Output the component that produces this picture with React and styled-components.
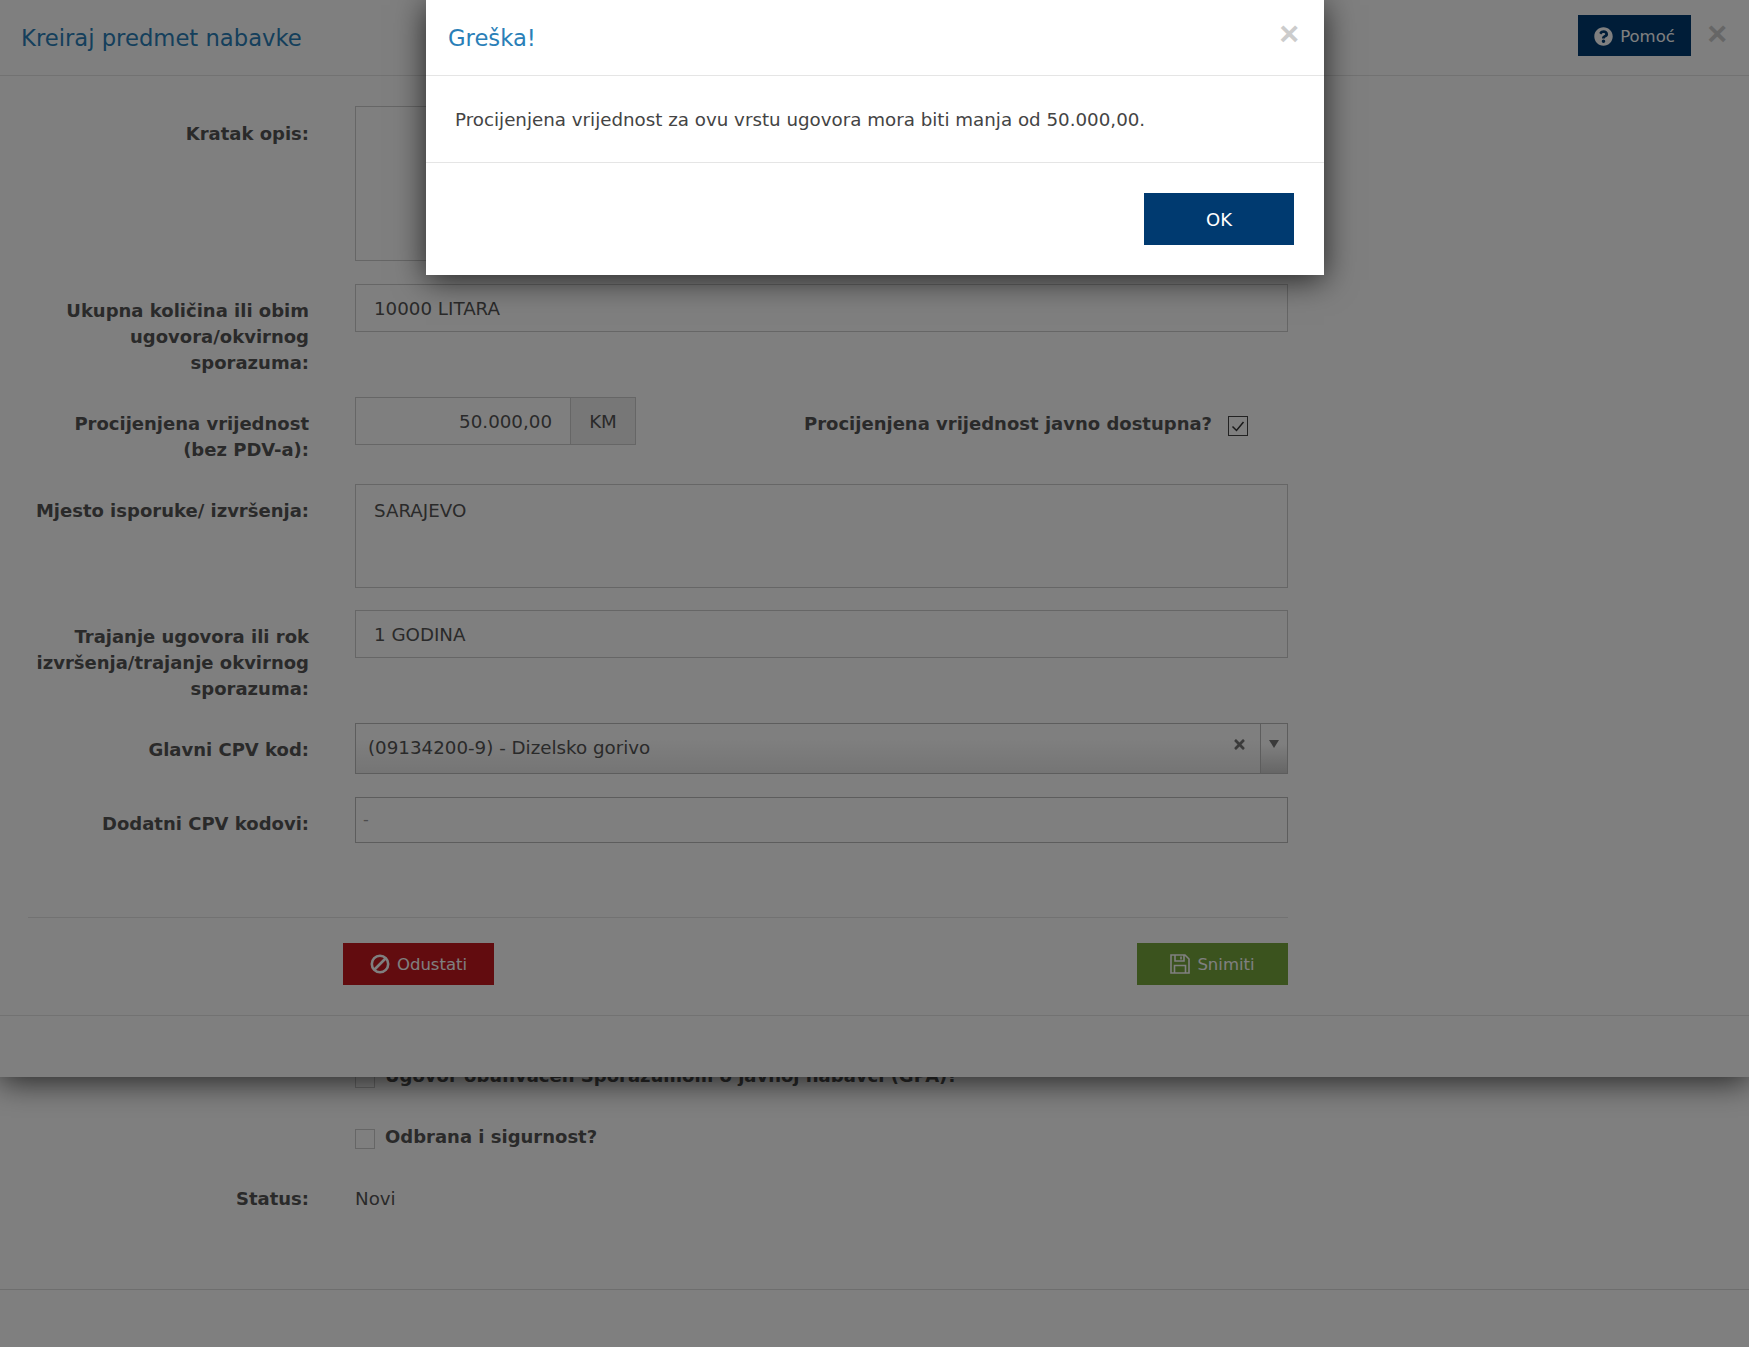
import styled, { createGlobalStyle } from "styled-components";
import { FaQuestionCircle, FaTimes } from "react-icons/fa";

const GlobalStyle = createGlobalStyle`
  html, body {
    margin: 0;
    padding: 0;
    background: #fff;
  }
  body {
    font-family: "DejaVu Sans", Verdana, sans-serif;
    font-size: 18.25px;
    color: #555;
  }
  * {
    box-sizing: border-box;
  }
`;

const Page = styled.div`
  position: relative;
  width: 1749px;
  height: 1347px;
  overflow: hidden;
  background: #fff;
`;

const BasePage = styled.div`
  padding: 1056px 0 0 28px;
  height: 1347px;
`;

const BaseLine = styled.div`
  position: absolute;
  left: 0;
  right: 0;
  top: 1289px;
  border-top: 1px solid #ddd;
`;

const CheckRow = styled.div`
  display: flex;
  align-items: flex-start;
  gap: 10px;
  padding-left: 327px;
  height: ${(p) => p.$h || 61}px;
  padding-top: 8px;
  font-weight: bold;
  font-size: 18px;
  line-height: 24px;
`;

const Box = styled.span`
  flex: none;
  display: flex;
  align-items: center;
  justify-content: center;
  width: 20px;
  height: 20px;
  margin-top: 4px;
  border: 1px solid #ccc;
  background: #fff;
`;

const StatusRow = styled.div`
  display: grid;
  grid-template-columns: 281px 1fr;
  column-gap: 46px;
  line-height: 26px;
  padding-top: 7px;
`;

const Panel = styled.div`
  position: absolute;
  left: 0;
  top: 0;
  width: 100%;
  height: 1077px;
  background: #fff;
  box-shadow: 0 5px 30px rgba(0, 0, 0, 0.7);
`;

const PanelHeader = styled.div`
  display: flex;
  align-items: center;
  height: 76px;
  padding: 0 22px 0 21px;
  border-bottom: 1px solid #e5e5e5;
`;

const Title = styled.h4`
  margin: 0;
  flex: 1;
  font-size: 22.7px;
  font-weight: normal;
  color: #2a7fb8;
`;

const HelpButton = styled.div`
  display: flex;
  align-items: center;
  gap: 7px;
  width: 113px;
  height: 41px;
  margin-top: -5px;
  padding: 2px 0 0 16px;
  background: #003a70;
  color: #fff;
  font-size: 16.5px;
`;

const HelpIcon = styled(FaQuestionCircle)`
  font-size: 19px;
`;

const CloseMark = styled.span`
  font-family: "Liberation Sans", Arial, sans-serif;
  font-size: 34px;
  line-height: 30px;
  font-weight: bold;
  color: #ccc;
`;

const PanelClose = styled(CloseMark)`
  margin: -9px 0 0 16px;
`;

const Form = styled.div`
  padding: 30px 0 0 28px;
  width: 1288px;
  display: flex;
  flex-direction: column;
`;

const Row = styled.div`
  display: grid;
  grid-template-columns: 281px 1fr;
  column-gap: 46px;
  margin-bottom: ${(p) => p.$gap ?? 22}px;
`;

const Label = styled.label`
  display: block;
  text-align: right;
  font-weight: bold;
  font-size: 18px;
  line-height: 26px;
  padding-top: ${(p) => p.$top ?? 14}px;
  margin-bottom: -1px;
  color: #555;
`;

const TextArea = styled.div`
  height: ${(p) => p.$h}px;
  border: 1px solid #ccc;
  padding: 13px 18px;
  line-height: 26px;
  background: #fff;
`;

const Input = styled.div`
  height: 48px;
  border: 1px solid #ccc;
  padding: 0 18px;
  line-height: 47px;
  background: #fff;
`;

const ValueLine = styled.div`
  display: flex;
  align-items: flex-start;
`;

const NumberInput = styled(Input)`
  width: 215px;
  text-align: right;
  border-right: 0;
  line-height: 48px;
`;

const Addon = styled.div`
  width: 66px;
  height: 48px;
  border: 1px solid #ccc;
  background: #eee;
  line-height: 48px;
  text-align: center;
`;

const PublicLabel = styled.span`
  margin-left: 168px;
  font-weight: bold;
  font-size: 18px;
  line-height: 26px;
  padding-top: 14px;
  white-space: nowrap;
`;

const PublicBox = styled.span`
  flex: none;
  display: flex;
  width: 20px;
  height: 20px;
  margin: 19px 0 0 16px;
  border: 1px solid #444;
  background: #fff;
`;

const Select = styled.div`
  display: flex;
  align-items: center;
  height: 51px;
  border: 1px solid #bbb;
  padding-left: 12px;
  background: linear-gradient(#fff 30%, #eaeaea 100%);
  color: #555;
`;

const SelectText = styled.span`
  flex: 1;
  margin-top: -2px;
`;

const SelectClear = styled.span`
  display: flex;
  margin: -8px 13px 0 0;
  font-size: 15px;
  color: #777;
`;

const SelectArrow = styled.span`
  align-self: stretch;
  width: 27px;
  border-left: 1px solid #bbb;
  background: linear-gradient(#fff 40%, #ccc 100%);
  display: flex;
  justify-content: center;
  padding-top: 16px;
  &::after {
    content: "";
    width: 0;
    height: 0;
    border-left: 5px solid transparent;
    border-right: 5px solid transparent;
    border-top: 8px solid #777;
  }
`;

const TagInput = styled.div`
  height: 46px;
  border: 1px solid #bbb;
  padding-left: 7px;
  line-height: 44px;
  color: #999;
  font-size: 16px;
  background: #fff;
`;

const FormFooter = styled.div`
  display: flex;
  justify-content: space-between;
  margin-top: 74px;
  padding: 25px 0 0 315px;
  border-top: 1px solid #e5e5e5;
`;

const ActionButton = styled.div`
  display: flex;
  align-items: center;
  justify-content: center;
  gap: 7px;
  width: ${(p) => p.$w}px;
  height: 42px;
  background: ${(p) => p.$bg};
  color: #fff;
  font-size: 16.5px;
`;

const PanelBottom = styled.div`
  margin-top: 30px;
  border-top: 1px solid #e5e5e5;
`;

const Backdrop = styled.div`
  position: absolute;
  inset: 0;
  background: rgba(0, 0, 0, 0.5);
`;

const Dialog = styled.div`
  position: absolute;
  left: 426px;
  top: 0;
  width: 898px;
  height: 275px;
  background: #fff;
  box-shadow: 0 5px 30px rgba(0, 0, 0, 0.7);
`;

const DialogHeader = styled.div`
  display: flex;
  align-items: center;
  justify-content: space-between;
  height: 76px;
  padding: 0 25px 0 22px;
  border-bottom: 1px solid #e5e5e5;
`;

const DialogClose = styled(CloseMark)`
  margin-top: -9px;
`;

const DialogBody = styled.div`
  height: 87px;
  padding: 0 29px;
  display: flex;
  align-items: center;
  border-bottom: 1px solid #e5e5e5;
  color: #444;
`;

const DialogFooter = styled.div`
  display: flex;
  justify-content: flex-end;
  padding: 30px 30px 0 0;
`;

const OkButton = styled.div`
  width: 150px;
  height: 52px;
  background: #003a70;
  color: #fff;
  font-size: 18px;
  display: flex;
  align-items: center;
  justify-content: center;
`;

const BanIcon = () => (
  <svg width="20" height="20" viewBox="0 0 20 20" fill="none" stroke="currentColor" strokeWidth="2.6">
    <circle cx="10" cy="10" r="8.2" />
    <path d="M4.5 15.5 15.5 4.5" />
  </svg>
);

const SaveIcon = () => (
  <svg width="20" height="20" viewBox="0 0 20 20" fill="none" stroke="currentColor" strokeWidth="1.6">
    <path d="M1 1h14l4 4v14H1z" />
    <path d="M5 1v6h9V1M11 2.5v3" />
    <path d="M4.5 19v-7.5h11V19" />
  </svg>
);

const CheckIcon = () => (
  <svg width="18" height="18" viewBox="0 0 18 18" fill="none" stroke="#333" strokeWidth="1.5">
    <path d="M3.5 9.5 7.5 13.5 14.5 5" />
  </svg>
);

export default function App() {
  return (
    <Page>
      <GlobalStyle />
      <BasePage>
        <CheckRow>
          <Box />
          Ugovor obuhvaćen Sporazumom o javnoj nabavci (GPA)?
        </CheckRow>
        <CheckRow $h={62}>
          <Box />
          Odbrana i sigurnost?
        </CheckRow>
        <StatusRow>
          <Label $top={0}>Status:</Label>
          <span>Novi</span>
        </StatusRow>
      </BasePage>
      <BaseLine />

      <Panel>
        <PanelHeader>
          <Title>Kreiraj predmet nabavke</Title>
          <HelpButton>
            <HelpIcon />
            Pomoć
          </HelpButton>
          <PanelClose>×</PanelClose>
        </PanelHeader>
        <Form>
          <Row $gap={23}>
            <Label $top={15}>Kratak opis:</Label>
            <TextArea $h={155} />
          </Row>
          <Row>
            <Label>Ukupna količina ili obim ugovora/okvirnog sporazuma:</Label>
            <Input>10000 LITARA</Input>
          </Row>
          <Row>
            <Label>Procijenjena vrijednost (bez PDV-a):</Label>
            <ValueLine>
              <NumberInput>50.000,00</NumberInput>
              <Addon>KM</Addon>
              <PublicLabel>Procijenjena vrijednost javno dostupna?</PublicLabel>
              <PublicBox>
                <CheckIcon />
              </PublicBox>
            </ValueLine>
          </Row>
          <Row>
            <Label>Mjesto isporuke/ izvršenja:</Label>
            <TextArea $h={104}>SARAJEVO</TextArea>
          </Row>
          <Row>
            <Label>Trajanje ugovora ili rok izvršenja/trajanje okvirnog sporazuma:</Label>
            <Input>1 GODINA</Input>
          </Row>
          <Row $gap={23}>
            <Label>Glavni CPV kod:</Label>
            <Select>
              <SelectText>(09134200-9) - Dizelsko gorivo</SelectText>
              <SelectClear>
                <FaTimes />
              </SelectClear>
              <SelectArrow />
            </Select>
          </Row>
          <Row $gap={0}>
            <Label>Dodatni CPV kodovi:</Label>
            <TagInput>-</TagInput>
          </Row>
          <FormFooter>
            <ActionButton $w={151} $bg="#c4181f">
              <BanIcon />
              Odustati
            </ActionButton>
            <ActionButton $w={151} $bg="#76a63c">
              <SaveIcon />
              Snimiti
            </ActionButton>
          </FormFooter>
        </Form>
        <PanelBottom />
      </Panel>

      <Backdrop />

      <Dialog>
        <DialogHeader>
          <Title>Greška!</Title>
          <DialogClose>×</DialogClose>
        </DialogHeader>
        <DialogBody>
          Procijenjena vrijednost za ovu vrstu ugovora mora biti manja od 50.000,00.
        </DialogBody>
        <DialogFooter>
          <OkButton>OK</OkButton>
        </DialogFooter>
      </Dialog>
    </Page>
  );
}
